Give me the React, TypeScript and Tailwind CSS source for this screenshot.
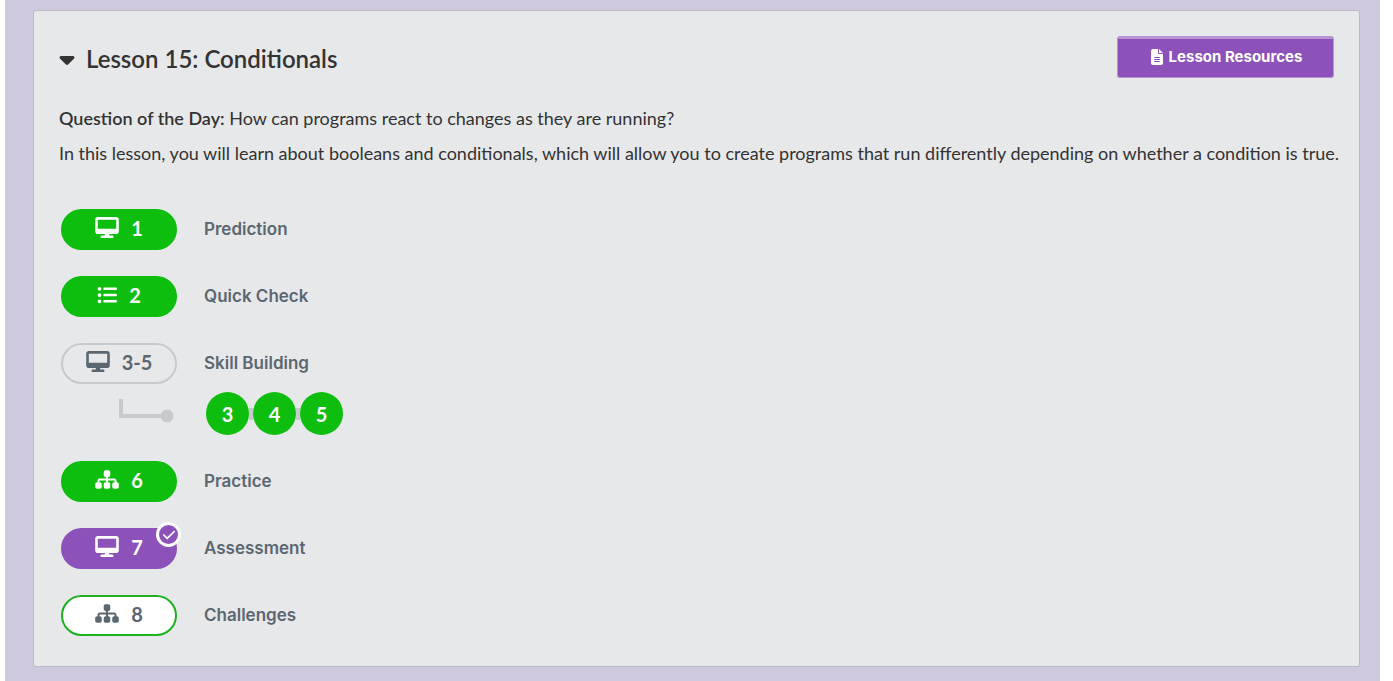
import { FaCaretDown, FaCheck, FaDesktop, FaFileLines, FaListUl, FaSitemap } from "react-icons/fa6";
import type { IconType } from "react-icons";
import { clsx } from "clsx";

type Status = "done" | "group" | "assessed" | "open";

interface Level {
  label: string;
  title: string;
  icon: IconType;
  status: Status;
  steps?: number[];
}

const levels: Level[] = [
  { label: "1", title: "Prediction", icon: FaDesktop, status: "done" },
  { label: "2", title: "Quick Check", icon: FaListUl, status: "done" },
  { label: "3-5", title: "Skill Building", icon: FaDesktop, status: "group", steps: [3, 4, 5] },
  { label: "6", title: "Practice", icon: FaSitemap, status: "done" },
  { label: "7", title: "Assessment", icon: FaDesktop, status: "assessed" },
  { label: "8", title: "Challenges", icon: FaSitemap, status: "open" },
];

const pillStyles: Record<Status, string> = {
  done: "border-[#0ebe0e] bg-[#0ebe0e] text-white",
  group: "border-[#c6cacd] text-[#5b6770]",
  assessed: "border-[#8c52ba] bg-[#8c52ba] text-white",
  open: "border-[#1fb022] bg-white text-[#5b6770]",
};

function Pill({ level }: { level: Level }) {
  const Icon = level.icon;
  return (
    <a
      href={`#level-${level.label}`}
      aria-label={`${level.label} ${level.title}`}
      className={clsx(
        "relative flex h-[41px] w-[116px] shrink-0 items-center justify-center gap-3 rounded-full border-2 pb-1 text-xl leading-6 font-bold",
        pillStyles[level.status],
      )}
    >
      <Icon className={level.icon === FaListUl ? "size-5" : "h-[21px] w-6"} aria-hidden="true" />
      <span>{level.label}</span>
      {level.status === "assessed" && (
        <span className="absolute -top-2 -right-1.5 flex size-[25px] items-center justify-center rounded-full border-[3px] border-white bg-[#8c52ba]">
          <FaCheck className="size-3.5" aria-hidden="true" />
        </span>
      )}
    </a>
  );
}

function Steps({ steps }: { steps: number[] }) {
  return (
    <div className="mt-2 flex items-center">
      <svg className="ml-[57px] h-8 w-[56px] shrink-0" viewBox="0 0 56 32" aria-hidden="true">
        <path d="M3 1v17h44" fill="none" stroke="#c6cacd" strokeWidth="4" />
        <circle cx="49" cy="18" r="6.5" fill="#c6cacd" />
      </svg>
      <ol className="ml-8 flex items-center">
        {steps.map((step, i) => (
          <li key={step} className="flex items-center">
            {i > 0 && <span className="h-3 w-1 bg-[#c6cacd]" />}
            <a
              href={`#level-${step}`}
              className="flex size-[43px] items-center justify-center rounded-full bg-[#0ebe0e] text-xl leading-6 font-bold text-white"
            >
              {step}
            </a>
          </li>
        ))}
      </ol>
    </div>
  );
}

export default function App() {
  return (
    <div className="min-h-screen bg-white pr-[13px] pl-[5px] font-['Lato',sans-serif] text-[#333]">
      <main className="min-h-screen bg-[#cfc9de] pt-2.5 pr-5 pb-[15px] pl-7">
        <section className="rounded-[3px] border border-[#bbb9c2] bg-[#e7e8ea] px-[25px] pt-[25px] pb-[30px]">
          <header className="flex items-center justify-between">
            <h2 className="pt-1 text-[24px] leading-8 font-semibold">
              <button type="button" aria-expanded="true" className="flex items-center gap-[7px]">
                <FaCaretDown className="-ml-1 size-6" aria-hidden="true" />
                <span>Lesson 15: Conditionals</span>
              </button>
            </h2>
            <button
              type="button"
              className="flex h-[42px] w-[217px] items-center justify-center gap-1 rounded-[3px] border border-t-[3px] border-[#b893d1] bg-[#8c52ba] pb-0.5 font-['Inter',sans-serif] text-[15px] leading-5 font-bold text-white"
            >
              <FaFileLines className="size-4" aria-hidden="true" />
              <span>Lesson Resources</span>
            </button>
          </header>

          <div className="mt-7 -mr-4 text-[18px] leading-[25px]">
            <p>
              <strong className="font-semibold">Question of the Day:</strong> How can programs react to changes as they
              are running?
            </p>
            <p className="mt-2.5">
              In this lesson, you will learn about booleans and conditionals, which will allow you to create programs
              that run differently depending on whether a condition is true.
            </p>
          </div>

          <ol className="mt-[43px] ml-0.5 flex flex-col gap-[26px]">
            {levels.map((level) => (
              <li key={level.label}>
                <div className="flex items-center">
                  <Pill level={level} />
                  <span className="ml-[27px] pb-0.5 font-['Inter',sans-serif] text-[17px] leading-6 font-semibold text-[#5b6770]">
                    {level.title}
                  </span>
                </div>
                {level.steps && <Steps steps={level.steps} />}
              </li>
            ))}
          </ol>
        </section>
      </main>
    </div>
  );
}
